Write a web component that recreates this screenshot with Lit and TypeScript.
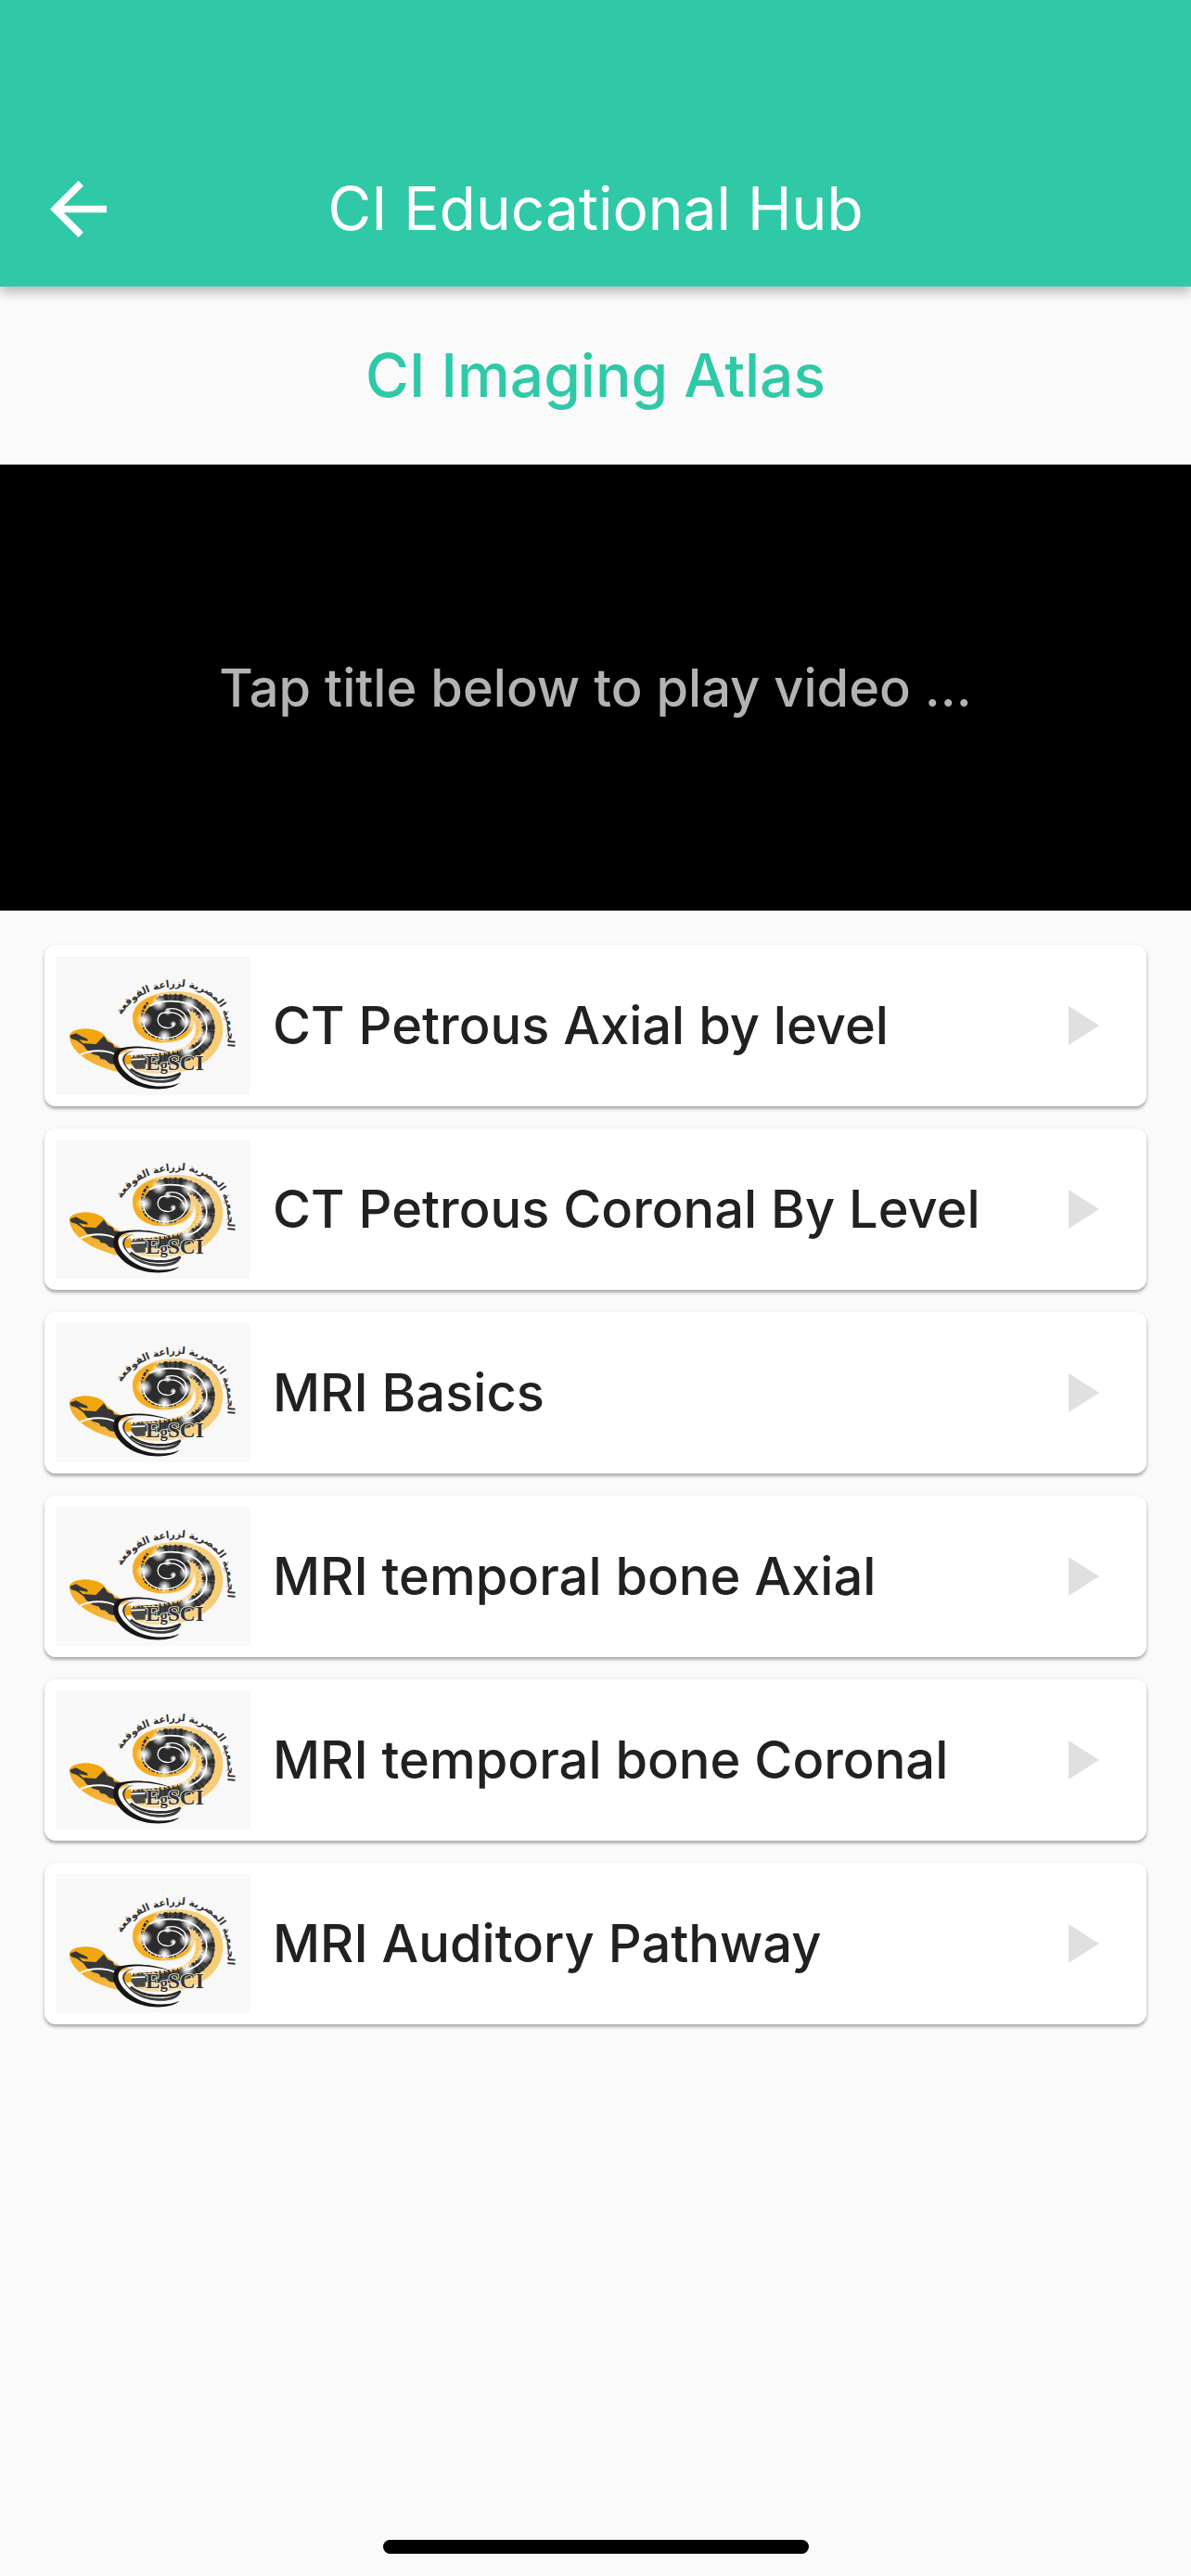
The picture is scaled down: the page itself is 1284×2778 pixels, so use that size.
import { LitElement, html, css, svg } from "lit";
import { customElement, property } from "lit/decorators.js";

/** Society emblem: a cochlea drawn as a coiled tube, with its name around the coil. */
@customElement("society-logo")
class SocietyLogo extends LitElement {
  static styles = css`
    :host {
      display: block;
      flex: none;
      width: 210px;
      height: 150px;
      background: #f8f8f8;
    }
    .art {
      display: block;
      width: 100%;
      height: 100%;
    }
    .arabic {
      font: 700 32px "DejaVu Sans", sans-serif;
      fill: #333;
    }
    .latin {
      font: 700 70px "Liberation Serif", serif;
      fill: #333;
      stroke: #f8f0dc;
      stroke-width: 5px;
      paint-order: stroke;
    }
    .small {
      font-size: 50px;
    }
  `;

  private glow(x: number, y: number, r: number) {
    return svg`<circle cx=${x} cy=${y} r=${r} fill="url(#glow)" />`;
  }

  render() {
    return html`
      <svg class="art" viewBox="60 63 630 450" role="img" aria-label="EgSCI">
        <defs>
          <radialGradient id="glow">
            <stop offset="0" stop-color="#fff" />
            <stop offset="0.3" stop-color="#fff" stop-opacity="0.8" />
            <stop offset="1" stop-color="#fff" stop-opacity="0" />
          </radialGradient>
          <linearGradient id="gold" x1="0" x2="1">
            <stop offset="0" stop-color="#f3a81c" />
            <stop offset="0.35" stop-color="#f6bd50" />
            <stop offset="0.6" stop-color="#f9d48a" />
            <stop offset="1" stop-color="#f7cb74" />
          </linearGradient>
          <path id="arc" d="M262 276 C290 204 366 162 458 162 C568 166 636 236 612 380" />
        </defs>

        <!-- tube body from coil to tail -->
        <path
          fill="url(#gold)"
          d="M309 262 C309 205 380 177 450 177 C540 177 601 225 601 300 C601 395 500 450 370 450
             C250 452 110 400 104 322 C112 292 195 290 218 320 C245 352 290 372 340 377
             C420 384 478 364 497 322 C480 336 430 346 385 342 C335 334 309 305 309 262Z"
        />
        <path
          fill="#f4ad24"
          d="M309 262 C312 225 345 200 385 190 L400 205 C360 215 345 240 345 270 C345 310 380 330 410 334
             C450 334 480 316 497 292 C500 320 450 345 400 343 C340 338 309 308 309 262Z"
        />

        <!-- dark band with its mottled edge -->
        <path
          fill="none"
          stroke="#404040"
          stroke-width="37"
          d="M392 216 C460 188 556 222 556 300 C556 356 500 390 410 398 L300 402"
        />
        <path
          fill="none"
          stroke="#2c2c2c"
          stroke-width="42"
          stroke-dasharray="5 8 11 6 3 12"
          d="M400 212 C460 192 554 222 554 300 C554 356 500 388 410 396 L330 398"
        />
        <path
          fill="none"
          stroke="#f3b545"
          stroke-width="5"
          stroke-dasharray="9 6 4 10"
          d="M520 272 C528 320 496 366 412 381 L310 387"
        />

        <!-- gap between the coil and the body -->
        <path
          fill="#f8f8f8"
          d="M506 274 C510 318 470 346 400 346 L320 344 L300 368 C380 382 446 376 484 352
             C514 330 518 300 506 274Z"
        />
        <ellipse cx="420" cy="269" rx="77" ry="61" fill="#2b2b2b" />
        <path
          fill="none"
          stroke="#2b2b2b"
          stroke-width="8"
          stroke-dasharray="6 4 13 5"
          d="M358 214 C334 238 335 280 350 304 C370 328 410 336 450 326"
        />

        <!-- tube highlights -->
        <g fill="none" stroke="#fff" stroke-width="4">
          <path d="M364 225 C420 196 500 208 530 246 C562 288 554 350 490 372" stroke-width="5" />
          <path d="M345 272 C342 306 376 330 416 328 C454 328 482 306 484 276 C484 242 448 226 418 236" />
          <path d="M418 246 C386 244 382 282 406 292 C432 302 450 288 442 278" />
          <path d="M418 246 C446 244 468 252 474 274" />
        </g>
        ${this.glow(394, 216, 26)} ${this.glow(492, 220, 28)} ${this.glow(346, 270, 27)}
        ${this.glow(482, 276, 24)} ${this.glow(412, 322, 23)} ${this.glow(545, 264, 26)}
        ${this.glow(542, 327, 26)} ${this.glow(484, 370, 26)} ${this.glow(422, 243, 13)}
        ${this.glow(440, 283, 11)}

        <!-- tail end -->
        <path
          fill="#f2a60d"
          d="M105 318 C118 292 190 292 218 320 L200 344 C178 350 150 344 135 334 L106 330Z"
        />
        <path
          fill="#363636"
          d="M106 320 L126 313 L142 322 L162 331 L164 338 L135 333 L148 345 L190 348 L216 322 L228 340
             L244 346 L250 358 L276 362 L248 386 L254 414 L236 412 L220 398 L206 396 L200 386 L180 380
             L160 366 L150 352 L128 336 L110 330Z"
        />
        <path
          fill="none"
          stroke="#d99a24"
          stroke-width="4"
          stroke-dasharray="6 8 3 7"
          d="M160 374 L190 390 L214 402 L246 416"
        />
        <path fill="#f4b02c" d="M112 336 L130 340 L150 356 L162 372 L138 378 C124 364 114 350 112 336Z" />
        <path d="M140 382 C176 366 220 366 250 380" fill="none" stroke="#fff" stroke-width="6" />

        <!-- electrode loops -->
        <path d="M262 385 C290 366 350 364 400 378 L310 384 L304 412 L345 416 L350 432 L470 436
          C460 474 420 488 370 484 C300 474 262 430 262 385Z" fill="#f8f8f8" />
        <path d="M282 385 L304 382 L304 413 L290 414 C280 406 280 394 282 385Z" fill="#f2a60d" />
        <path d="M300 410 C310 440 380 452 450 437 L470 420 L345 412Z" fill="#f9d894" />
        <path d="M304 391 L350 388 L350 428 L318 428 L304 410Z" fill="#4a4a4a" />
        <path d="M304 398 L350 396" stroke="#fff" stroke-width="5" />
        <path
          fill="#161616"
          d="M428 374 C370 352 290 350 258 366 C236 388 244 430 290 464 C340 500 430 502 460 474
             C416 492 350 488 306 456 C262 424 250 386 276 370 C310 354 370 362 428 374Z"
        />
        <path
          fill="#3c3c3c"
          d="M318 368 C280 376 272 400 298 430 C336 470 440 480 466 438 C464 482 366 484 316 450
             C266 412 260 376 318 368Z"
        />
        <path d="M302 428 C344 462 420 466 464 442" fill="none" stroke="#2a2a2a" stroke-width="8" />

        <text class="latin" x="351" y="432">E<tspan class="small">g</tspan>SCI</text>
        <text class="arabic" lang="ar" text-anchor="middle">
          <textPath href="#arc" startOffset="50%">الجمعية المصرية لزراعة القوقعة</textPath>
        </text>
      </svg>
    `;
  }
}

/** One tappable video title. */
@customElement("video-card")
class VideoCard extends LitElement {
  @property() label = "";

  static styles = css`
    :host {
      display: block;
    }
    .card {
      box-sizing: border-box;
      display: flex;
      align-items: center;
      gap: 24px;
      width: 100%;
      padding: 12px 51px 12px 12px;
      border: 0;
      border-radius: 12px;
      background: #fff;
      box-shadow: 0 3px 3px rgba(0, 0, 0, 0.2), 0 2px 5px rgba(0, 0, 0, 0.16);
      color: #212121;
      font: 500 56px/72px Inter, "Open Sans", sans-serif;
      text-align: start;
    }
    .label {
      flex: 1;
    }
    .play {
      flex: none;
      width: 33px;
      height: 42px;
      fill: #e0e0e0;
    }
  `;

  render() {
    return html`
      <button class="card" type="button">
        <society-logo></society-logo>
        <span class="label">${this.label}</span>
        <svg class="play" viewBox="0 0 33 42" aria-hidden="true"><path d="M0 0V42L33 21Z" /></svg>
      </button>
    `;
  }
}

@customElement("app-root")
class AppRoot extends LitElement {
  private videos = [
    "CT Petrous Axial by level",
    "CT Petrous Coronal By Level",
    "MRI Basics",
    "MRI temporal bone Axial",
    "MRI temporal bone Coronal",
    "MRI Auditory Pathway",
  ];

  static styles = css`
    :host {
      display: flex;
      flex-direction: column;
      min-height: 100vh;
      background: #fafafa;
      font-family: Inter, "Open Sans", sans-serif;
    }
    .bar {
      display: grid;
      grid-template-columns: 168px 1fr 168px;
      align-items: center;
      height: 168px;
      padding-top: 141px;
      background: #2fc9a8;
      box-shadow: 0 6px 12px rgba(0, 0, 0, 0.28);
      color: #fff;
    }
    .back {
      display: flex;
      align-items: center;
      height: 168px;
      padding: 0 0 0 54px;
      border: 0;
      background: none;
    }
    .arrow {
      width: 61px;
      height: 61px;
      fill: #fff;
    }
    .title {
      margin: 0;
      font-size: 64px;
      font-weight: 400;
      line-height: 84px;
      text-align: center;
    }
    .heading {
      margin: 0;
      padding: 54px 24px;
      color: #2fc9a8;
      font-size: 64px;
      font-weight: 500;
      line-height: 84px;
      text-align: center;
    }
    .player {
      display: flex;
      align-items: center;
      justify-content: center;
      aspect-ratio: 1284 / 481;
      background: #000;
      color: #b3b3b3;
      font-size: 56px;
      font-weight: 500;
      line-height: 72px;
    }
    .hint {
      margin: 0;
    }
    .list {
      display: flex;
      flex: 1;
      flex-direction: column;
      gap: 24px;
      margin: 0;
      padding: 37px 48px;
      list-style: none;
    }
    .home {
      align-self: center;
      width: 459px;
      height: 15px;
      margin-bottom: 24px;
      border-radius: 8px;
      background: #000;
    }
  `;

  render() {
    return html`
      <header class="bar">
        <button class="back" type="button" aria-label="Back">
          <svg class="arrow" viewBox="4 4 16 16" aria-hidden="true">
            <path d="M20 11H7.83l5.59-5.59L12 4l-8 8 8 8 1.41-1.41L7.83 13H20v-2z" />
          </svg>
        </button>
        <h1 class="title">CI Educational Hub</h1>
      </header>
      <h2 class="heading">CI Imaging Atlas</h2>
      <section class="player"><p class="hint">Tap title below to play video ...</p></section>
      <ul class="list">
        ${this.videos.map((v) => html`<li><video-card .label=${v}></video-card></li>`)}
      </ul>
      <div class="home"></div>
    `;
  }
}
